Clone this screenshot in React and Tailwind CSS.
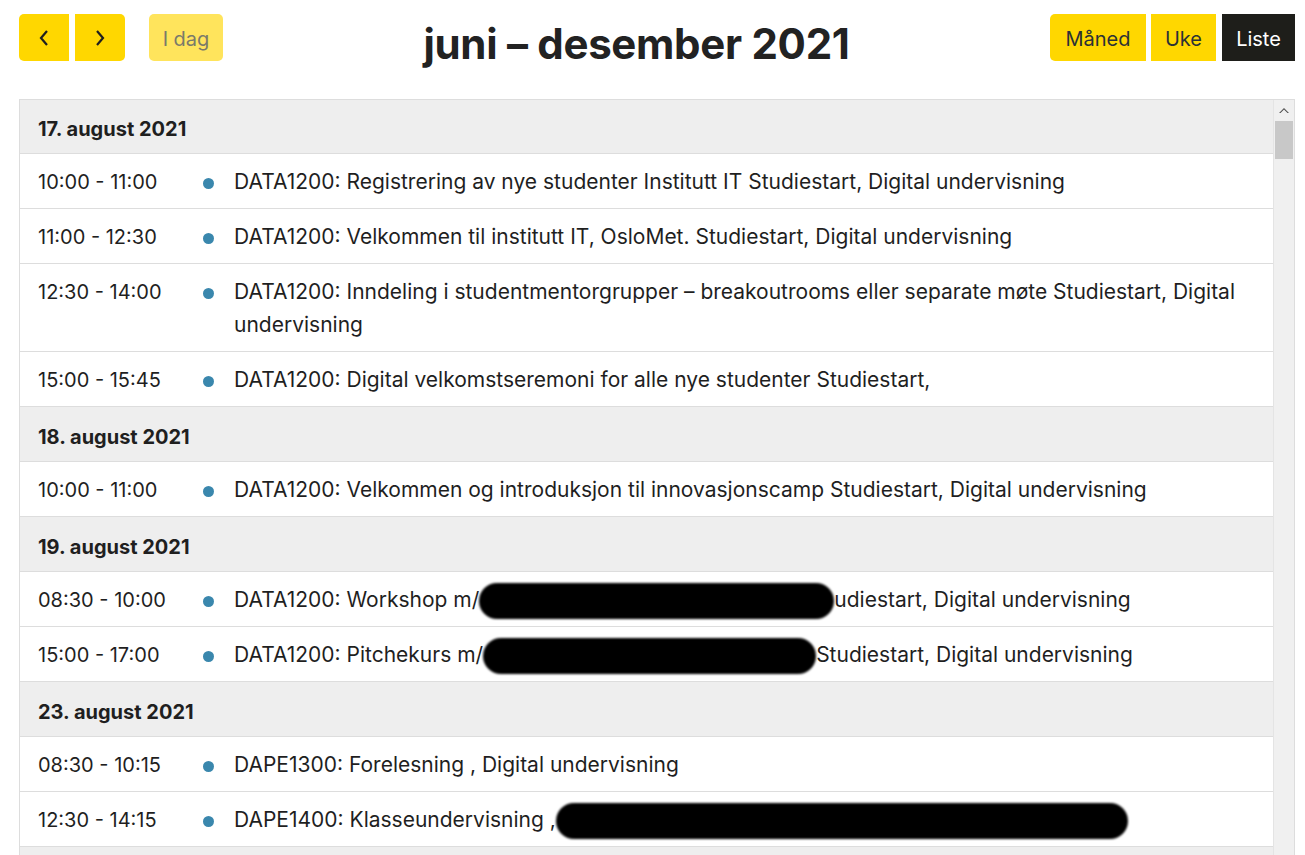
import React from 'react';

const days = [
  {
    date: '17. august 2021',
    events: [
      { time: '10:00 - 11:00', title: 'DATA1200: Registrering av nye studenter Institutt IT Studiestart, Digital undervisning' },
      { time: '11:00 - 12:30', title: 'DATA1200: Velkommen til institutt IT, OsloMet. Studiestart, Digital undervisning' },
      { time: '12:30 - 14:00', title: 'DATA1200: Inndeling i studentmentorgrupper – breakoutrooms eller separate møte Studiestart, Digital undervisning' },
      { time: '15:00 - 15:45', title: 'DATA1200: Digital velkomstseremoni for alle nye studenter Studiestart,' },
    ],
  },
  {
    date: '18. august 2021',
    events: [
      { time: '10:00 - 11:00', title: 'DATA1200: Velkommen og introduksjon til innovasjonscamp Studiestart, Digital undervisning' },
    ],
  },
  {
    date: '19. august 2021',
    events: [
      { time: '08:30 - 10:00', title: 'DATA1200: Workshop m/', redact: 'w-[355px]', tail: 'udiestart, Digital undervisning' },
      { time: '15:00 - 17:00', title: 'DATA1200: Pitchekurs m/', redact: 'w-[333px]', tail: 'Studiestart, Digital undervisning' },
    ],
  },
  {
    date: '23. august 2021',
    events: [
      { time: '08:30 - 10:15', title: 'DAPE1300: Forelesning , Digital undervisning' },
      { time: '12:30 - 14:15', title: 'DAPE1400: Klasseundervisning ,', redact: 'w-[572px]', tail: '' },
    ],
  },
];

const Redacted = ({ width }) => (
  <span className={`inline-block ${width} h-[36px] align-middle -my-2 rounded-full bg-black blur-[1px]`} />
);

const App = () => {
  return (
    <div className="h-[855px] overflow-hidden bg-white pl-[19px] pr-[10px] pt-[14px] text-[#1f1f1f]" style={{ fontFamily: 'Inter, "Liberation Sans", Arial, sans-serif' }}>
      <div className="flex h-[47px] items-center justify-between">
        <div className="flex items-center">
          <button className="flex h-[47px] w-[50px] items-center justify-center rounded-l-[5px] bg-[#ffd700]">
            <svg width="14" height="20" viewBox="0 0 14 20" fill="none" stroke="#1f1f1f" strokeWidth="2.2"><path d="M10 3 L4 10 L10 17" /></svg>
          </button>
          <button className="ml-[6px] flex h-[47px] w-[50px] items-center justify-center rounded-r-[5px] bg-[#ffd700]">
            <svg width="14" height="20" viewBox="0 0 14 20" fill="none" stroke="#1f1f1f" strokeWidth="2.2"><path d="M4 3 L10 10 L4 17" /></svg>
          </button>
          <button className="ml-[24px] h-[47px] w-[74px] rounded-[5px] bg-[#ffe45c] pt-[2px] text-[20px] text-[#7a7a6a]">I dag</button>
        </div>
        <h2 className="pt-[12px] text-[42px] font-bold leading-[47px] tracking-[-0.3px] text-[#222222]">juni – desember 2021</h2>
        <div className="flex items-center">
          <button className="h-[47px] w-[96px] rounded-l-[5px] bg-[#ffd700] pt-[2px] text-[20px] text-[#2b3136]">Måned</button>
          <button className="ml-[5px] h-[47px] w-[65px] bg-[#ffd700] pt-[2px] text-[20px] text-[#2b3136]">Uke</button>
          <button className="ml-[6px] h-[47px] w-[73px] bg-[#1e1e1a] pt-[2px] text-[20px] text-white">Liste</button>
        </div>
      </div>

      <div className="mt-[38px] flex h-[760px] border border-[#dddddd]">
        <div className="flex-1">
          {days.map((day, d) => (
            <div key={day.date}>
              <div className={`${d === 0 ? 'h-[54px] pt-[14px]' : 'h-[55px] pt-[15px]'} border-b border-[#dddddd] bg-[#eeeeee] px-[18px] text-[20px] font-bold text-[#1f1f1f]`}>
                {day.date}
              </div>
              {day.events.map((ev, i) => (
                <div key={i} className="flex h-auto items-start border-b border-[#dddddd] bg-white py-[15px] pl-[18px]">
                  <div className="h-[24px] w-[165px] shrink-0 pt-[2px] text-[20px] leading-[22px]">{ev.time}</div>
                  <div className="h-[24px] w-[31px] shrink-0 pt-[9px]">
                    <div className="h-[11px] w-[11px] rounded-full bg-[#3a87ad]" />
                  </div>
                  <div className="flex-1 pr-[20px] text-[21px] leading-[33px] -mt-[4px] -mb-[5px]">
                    {ev.title}
                    {ev.redact && <Redacted width={ev.redact} />}
                    {ev.tail}
                  </div>
                </div>
              ))}
            </div>
          ))}
          <div className="h-[40px] bg-[#eeeeee]" />
        </div>
        <div className="flex w-[21px] flex-col border-l border-[#e4e4e4] bg-[#f0f0f0]">
          <div className="flex h-[21px] items-center justify-center">
            <svg width="10" height="7" viewBox="0 0 10 7"><path d="M0 6 L5 1 L10 6 L8.5 6 L5 2.5 L1.5 6 Z" fill="#505050" /></svg>
          </div>
          <div className="mx-[1px] h-[38px] bg-[#c8c8c8]" />
        </div>
      </div>
    </div>
  );
};

export default App;
